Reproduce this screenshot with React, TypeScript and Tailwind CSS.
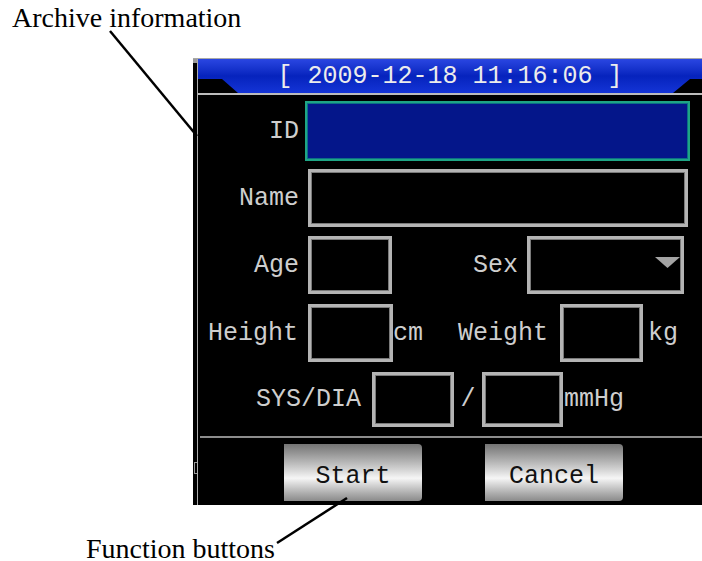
import React from "react";

function Box({ w, className = "" }: { w: string; className?: string }) {
  return <div className={`h-full border-[3px] border-[#b4b4b4] shadow-[inset_0_0_0_1px_#7a7a7a] ${w} ${className}`} />;
}

function Button({ label, className = "" }: { label: string; className?: string }) {
  return (
    <button
      className={`w-[138px] h-[57px] rounded-r-[4px] bg-linear-to-b from-[#747474] via-[#f6f6f6] via-60% to-[#8a8a8a] text-[#111] flex items-center justify-center pt-[8px] ${className}`}
    >
      {label}
    </button>
  );
}

export default function App() {
  return (
    <div className="relative w-[702px] h-[561px] bg-white overflow-hidden">
      {/* ANNOTATION TOP */}
      <div className="pl-[12px] pt-[4px] h-[32px] text-[28px] leading-[28px] text-black font-['Liberation_Serif',serif]">
        Archive information
      </div>

      {/* DEVICE SCREEN */}
      <div className="ml-[193px] mt-[26px] w-[509px] h-[447px] bg-black border-t border-[#a8a8a8] flex font-['Liberation_Mono',monospace] text-[25px] leading-none text-[#cecece]">
        <div className="w-[4px] flex flex-col">
          <div className="h-[4px] bg-[#9a9a9a]" />
          <div className="mt-[399px] h-[12px] border-y border-l border-[#9a9a9a] ml-[1px]" />
        </div>
        <div className="w-px bg-[#ababab]" />

        <div className="flex-1 flex flex-col">
          {/* header */}
          <div className="h-[34px] flex items-center justify-center text-[#ececec] whitespace-pre bg-linear-to-b from-[#2a46e2] via-[#0623bd] to-[#1434d6] [clip-path:polygon(0_0,100%_0,100%_20px,492px_20px,475px_34px,40px_34px,24px_20px,0_20px)]">
            [ 2009-12-18 11:16:06 ]
          </div>
          <div className="h-[2px] bg-[#bcbcbc]" />

          {/* form */}
          <div className="pt-[6px] flex flex-col">
            <div className="h-[60px] flex items-center">
              <span className="w-[101px] text-right">ID</span>
              <div className="ml-[6px] w-[385px] h-full border-2 border-[#1ea585] shadow-[inset_0_0_0_1px_#0c6f86] bg-[#04168a]" />
            </div>

            <div className="mt-[8px] h-[58px] flex items-center">
              <span className="w-[101px] text-right">Name</span>
              <Box w="ml-[9px] w-[380px]" />
            </div>

            <div className="mt-[9px] h-[58px] flex items-center">
              <span className="w-[101px] text-right">Age</span>
              <Box w="ml-[9px] w-[84px]" />
              <span className="w-[126px] text-right">Sex</span>
              <div className="ml-[9px] w-[157px] h-full border-[3px] border-[#b4b4b4] shadow-[inset_0_0_0_1px_#7a7a7a] flex items-center justify-end pr-[1px]">
                <svg width="25" height="11" viewBox="0 0 25 11" className="mb-[6px]">
                  <polygon points="0,0 25,0 12.5,11" fill="#a4a4a4" />
                </svg>
              </div>
            </div>

            <div className="mt-[10px] h-[58px] flex items-center">
              <span className="w-[100px] text-right">Height</span>
              <Box w="ml-[10px] w-[85px]" />
              <span className="w-[40px]">cm</span>
              <span className="w-[115px] text-right">Weight</span>
              <Box w="ml-[12px] w-[83px]" />
              <span className="ml-[5px]">kg</span>
            </div>

            <div className="mt-[10px] h-[55px] flex items-center">
              <span className="w-[163px] text-right">SYS/DIA</span>
              <Box w="ml-[11px] w-[82px]" />
              <span className="w-[28px] text-center">/</span>
              <Box w="w-[81px]" />
              <span className="ml-[1px]">mmHg</span>
            </div>

            <div className="mt-[9px] ml-[2px] h-[2px] bg-[#8c8c8c]" />

            <div className="mt-[6px] flex">
              <Button label="Start" className="ml-[86px]" />
              <Button label="Cancel" className="ml-[63px]" />
            </div>
          </div>
        </div>
      </div>

      {/* ANNOTATION BOTTOM */}
      <div className="pl-[86px] mt-[32px] text-[28px] leading-[24px] text-black font-['Liberation_Serif',serif]">
        Function buttons
      </div>

      {/* leader lines */}
      <svg className="absolute inset-0 pointer-events-none" width="702" height="561">
        <line x1="110" y1="31" x2="197" y2="136" stroke="#000" strokeWidth="2.5" />
        <line x1="277" y1="543" x2="347" y2="498" stroke="#000" strokeWidth="2.5" />
      </svg>
    </div>
  );
}
